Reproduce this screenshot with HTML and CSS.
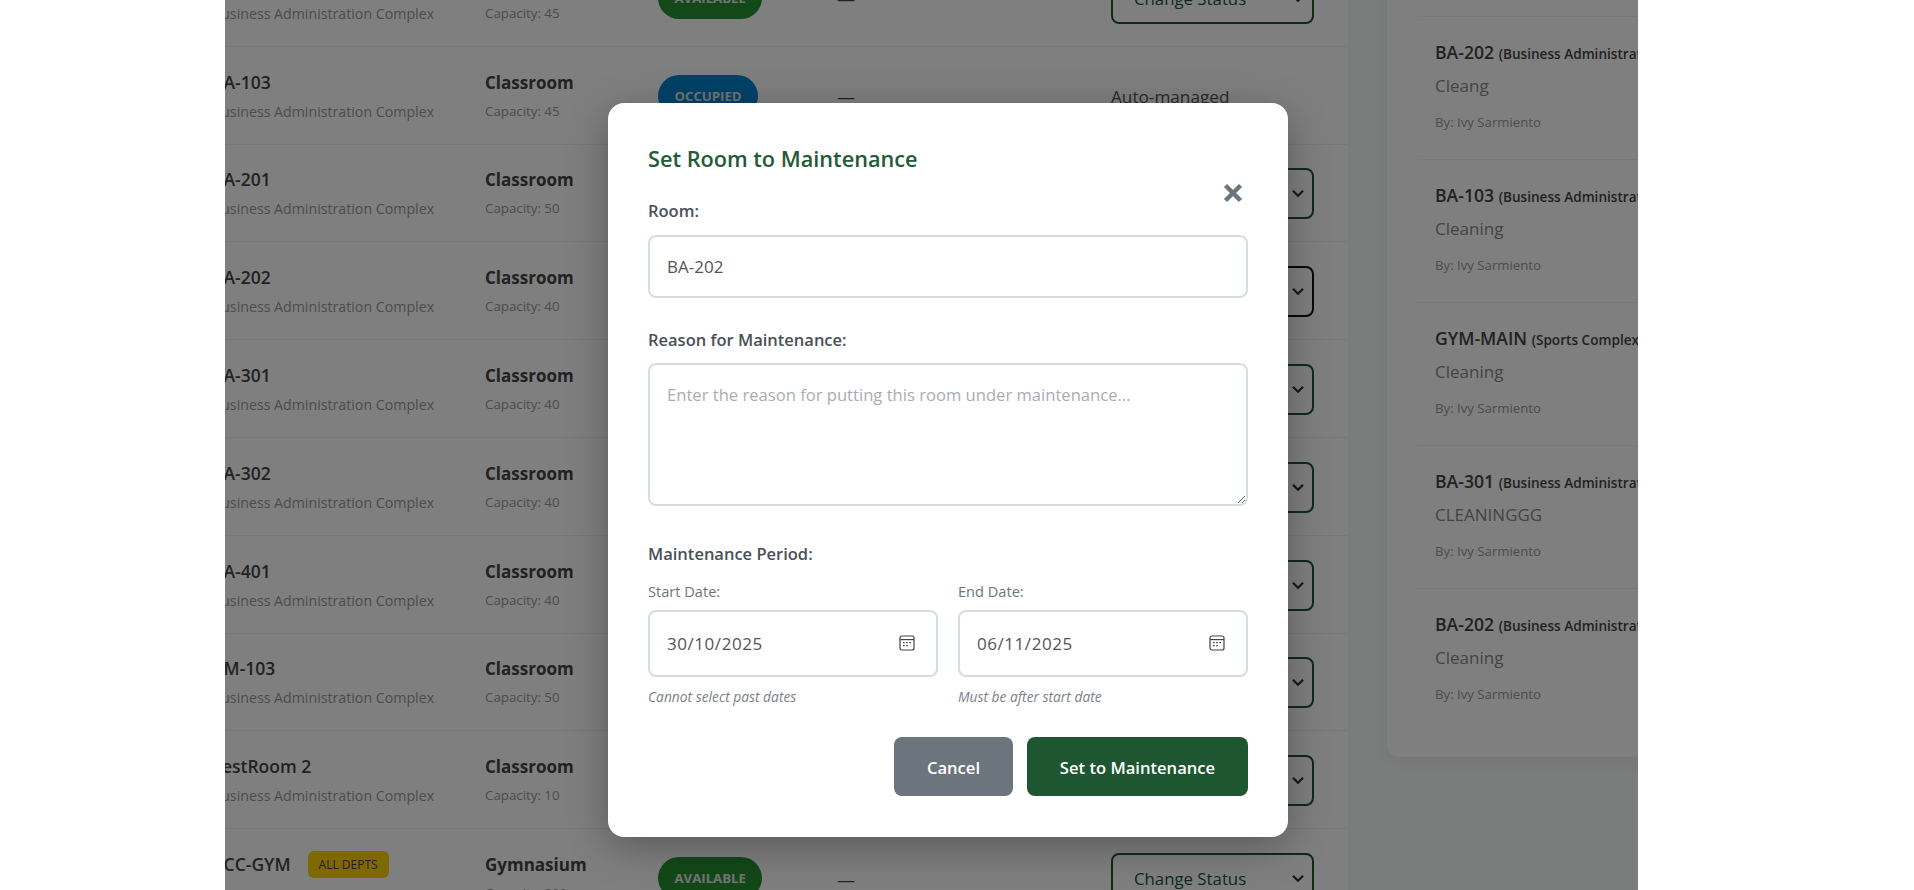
FILE: index.html
```html
<!DOCTYPE html>
<html lang="en">
<head>
    <meta charset="UTF-8">
    <meta name="viewport" content="width=device-width, initial-scale=1.0">
    <title>Room Management</title>
    <link rel="stylesheet" href="styles.css">
</head>
<body>
    <div class="page">
        <div class="dashboard">
            <div class="room-table">
                <div class="room-row">
                    <div><div class="room-name">BA-102</div><div class="room-building">Business Administration Complex</div></div>
                    <div><div class="room-type">Classroom</div><div class="room-capacity">Capacity: 45</div></div>
                    <div><span class="pill pill-available">AVAILABLE</span></div>
                    <div class="dash">—</div>
                    <div class="status-select">Change Status<svg viewBox="0 0 12 8"><path d="M1.5 1.5 6 6l4.5-4.5"/></svg></div>
                </div>
                <div class="room-row">
                    <div><div class="room-name">BA-103</div><div class="room-building">Business Administration Complex</div></div>
                    <div><div class="room-type">Classroom</div><div class="room-capacity">Capacity: 45</div></div>
                    <div><span class="pill pill-occupied">OCCUPIED</span></div>
                    <div class="dash">—</div>
                    <div class="auto-managed">Auto-managed</div>
                </div>
                <div class="room-row">
                    <div><div class="room-name">BA-201</div><div class="room-building">Business Administration Complex</div></div>
                    <div><div class="room-type">Classroom</div><div class="room-capacity">Capacity: 50</div></div>
                    <div><span class="pill pill-available">AVAILABLE</span></div>
                    <div class="dash">—</div>
                    <div class="status-select">Change Status<svg viewBox="0 0 12 8"><path d="M1.5 1.5 6 6l4.5-4.5"/></svg></div>
                </div>
                <div class="room-row">
                    <div><div class="room-name">BA-202</div><div class="room-building">Business Administration Complex</div></div>
                    <div><div class="room-type">Classroom</div><div class="room-capacity">Capacity: 40</div></div>
                    <div><span class="pill pill-available">AVAILABLE</span></div>
                    <div class="dash">—</div>
                    <div class="status-select is-active">Change Status<svg viewBox="0 0 12 8"><path d="M1.5 1.5 6 6l4.5-4.5"/></svg></div>
                </div>
                <div class="room-row">
                    <div><div class="room-name">BA-301</div><div class="room-building">Business Administration Complex</div></div>
                    <div><div class="room-type">Classroom</div><div class="room-capacity">Capacity: 40</div></div>
                    <div><span class="pill pill-available">AVAILABLE</span></div>
                    <div class="dash">—</div>
                    <div class="status-select">Change Status<svg viewBox="0 0 12 8"><path d="M1.5 1.5 6 6l4.5-4.5"/></svg></div>
                </div>
                <div class="room-row">
                    <div><div class="room-name">BA-302</div><div class="room-building">Business Administration Complex</div></div>
                    <div><div class="room-type">Classroom</div><div class="room-capacity">Capacity: 40</div></div>
                    <div><span class="pill pill-available">AVAILABLE</span></div>
                    <div class="dash">—</div>
                    <div class="status-select">Change Status<svg viewBox="0 0 12 8"><path d="M1.5 1.5 6 6l4.5-4.5"/></svg></div>
                </div>
                <div class="room-row">
                    <div><div class="room-name">BA-401</div><div class="room-building">Business Administration Complex</div></div>
                    <div><div class="room-type">Classroom</div><div class="room-capacity">Capacity: 40</div></div>
                    <div><span class="pill pill-available">AVAILABLE</span></div>
                    <div class="dash">—</div>
                    <div class="status-select">Change Status<svg viewBox="0 0 12 8"><path d="M1.5 1.5 6 6l4.5-4.5"/></svg></div>
                </div>
                <div class="room-row">
                    <div><div class="room-name">BM-103</div><div class="room-building">Business Administration Complex</div></div>
                    <div><div class="room-type">Classroom</div><div class="room-capacity">Capacity: 50</div></div>
                    <div><span class="pill pill-available">AVAILABLE</span></div>
                    <div class="dash">—</div>
                    <div class="status-select">Change Status<svg viewBox="0 0 12 8"><path d="M1.5 1.5 6 6l4.5-4.5"/></svg></div>
                </div>
                <div class="room-row">
                    <div><div class="room-name">TestRoom 2</div><div class="room-building">Business Administration Complex</div></div>
                    <div><div class="room-type">Classroom</div><div class="room-capacity">Capacity: 10</div></div>
                    <div><span class="pill pill-available">AVAILABLE</span></div>
                    <div class="dash">—</div>
                    <div class="status-select">Change Status<svg viewBox="0 0 12 8"><path d="M1.5 1.5 6 6l4.5-4.5"/></svg></div>
                </div>
                <div class="room-row">
                    <div><div class="room-name">ACC-GYM <span class="dept-badge">ALL DEPTS</span></div><div class="room-building">Sports Complex</div></div>
                    <div><div class="room-type">Gymnasium</div><div class="room-capacity">Capacity: 200</div></div>
                    <div><span class="pill pill-available">AVAILABLE</span></div>
                    <div class="dash">—</div>
                    <div class="status-select">Change Status<svg viewBox="0 0 12 8"><path d="M1.5 1.5 6 6l4.5-4.5"/></svg></div>
                </div>
            </div>

            <div class="side-card">
                <div class="side-list">
                    <div class="side-item">
                        <div class="side-title">BA-202 <span class="side-building">(Business Administration Complex)</span></div>
                        <div class="side-reason">Cleang</div>
                        <div class="side-by">By: Ivy Sarmiento</div>
                    </div>
                    <div class="side-item">
                        <div class="side-title">BA-103 <span class="side-building">(Business Administration Complex)</span></div>
                        <div class="side-reason">Cleaning</div>
                        <div class="side-by">By: Ivy Sarmiento</div>
                    </div>
                    <div class="side-item">
                        <div class="side-title">GYM-MAIN <span class="side-building">(Sports Complex)</span></div>
                        <div class="side-reason">Cleaning</div>
                        <div class="side-by">By: Ivy Sarmiento</div>
                    </div>
                    <div class="side-item">
                        <div class="side-title">BA-301 <span class="side-building">(Business Administration Complex)</span></div>
                        <div class="side-reason">CLEANINGGG</div>
                        <div class="side-by">By: Ivy Sarmiento</div>
                    </div>
                    <div class="side-item">
                        <div class="side-title">BA-202 <span class="side-building">(Business Administration Complex)</span></div>
                        <div class="side-reason">Cleaning</div>
                        <div class="side-by">By: Ivy Sarmiento</div>
                    </div>
                </div>
            </div>
        </div>

        <div class="overlay">
            <form class="modal">
                <h2>Set Room to Maintenance</h2>
                <button type="button" class="close-btn" aria-label="Close">
                    <svg viewBox="0 0 20 20"><path d="M2.5 2.5l15 15M17.5 2.5l-15 15"/></svg>
                </button>

                <label class="field-label" for="roomInput">Room:</label>
                <input class="field room-field" id="roomInput" type="text" value="BA-202">

                <label class="field-label reason-label" for="reasonInput">Reason for Maintenance:</label>
                <textarea class="field reason-field" id="reasonInput" placeholder="Enter the reason for putting this room under maintenance..."></textarea>

                <div class="field-label period-label">Maintenance Period:</div>
                <div class="date-row">
                    <div>
                        <label class="date-label" for="startDate">Start Date:</label>
                        <div class="date-box">
                            <input class="field date-field" id="startDate" type="text" value="30/10/2025">
                            <svg class="calendar" viewBox="0 0 16 16"><rect x="1" y="1" width="14" height="14" rx="2"/><path d="M1 4.6h14"/><path class="dots" d="M4 7.6h1.6M7.2 7.6h1.6M10.4 7.6H12M4 10.6h1.6M7.2 10.6h1.6"/></svg>
                        </div>
                        <small>Cannot select past dates</small>
                    </div>
                    <div>
                        <label class="date-label" for="endDate">End Date:</label>
                        <div class="date-box">
                            <input class="field date-field" id="endDate" type="text" value="06/11/2025">
                            <svg class="calendar" viewBox="0 0 16 16"><rect x="1" y="1" width="14" height="14" rx="2"/><path d="M1 4.6h14"/><path class="dots" d="M4 7.6h1.6M7.2 7.6h1.6M10.4 7.6H12M4 10.6h1.6M7.2 10.6h1.6"/></svg>
                        </div>
                        <small>Must be after start date</small>
                    </div>
                </div>

                <div class="modal-actions">
                    <button type="button" class="btn btn-cancel">Cancel</button>
                    <button type="button" class="btn btn-save">Set to Maintenance</button>
                </div>
            </form>
        </div>
    </div>
</body>
</html>
```

FILE: styles.css
```css
/* General */
body {
    margin: 0;
    background: #fff;
    font-family: "Open Sans", "Noto Sans", sans-serif;
    color: #333;
    overflow: hidden;
}

.page {
    position: relative;
    width: 1413px;
    height: 890px;
    margin-left: 225px;
    overflow: hidden;
    background: #f5f8f7;
}

.dashboard {
    display: flex;
    align-items: flex-start;
    gap: 39px;
    margin: -51px 0 0 -13px;
}

/* Room table */
.room-table {
    flex: none;
    width: 1136px;
    background: #fff;
}

.room-row {
    display: grid;
    grid-template-columns: 273px 172px 180px 274px 203px;
    align-items: center;
    box-sizing: border-box;
    height: 97.8px;
    padding-top: 1px;
    border-bottom: 1px solid #f0f0f0;
}

.room-name {
    font-size: 17.5px;
    font-weight: 600;
    line-height: 24px;
    color: #444;
    display: flex;
    align-items: center;
    gap: 17px;
}

.room-building {
    margin-top: 8px;
    font-size: 14.2px;
    line-height: 20px;
    color: #999;
}

.room-type {
    font-size: 17px;
    font-weight: 700;
    line-height: 24px;
    color: #444;
}

.room-capacity {
    margin-top: 6px;
    font-size: 13.3px;
    line-height: 20px;
    color: #999;
}

.pill {
    display: inline-block;
    margin-left: 1px;
    padding: 0 16.5px;
    border-radius: 21px;
    font-size: 13.2px;
    font-weight: 700;
    line-height: 42px;
    color: #e8e8e8;
}

.pill-available {
    background: #269030;
}

.pill-occupied {
    background: #0084d0;
}

.dash {
    padding-top: 3px;
    font-size: 18px;
    color: #444;
}

.auto-managed {
    padding-top: 1px;
    font-size: 17.2px;
    color: #555;
}

.status-select {
    display: flex;
    align-items: center;
    justify-content: space-between;
    box-sizing: border-box;
    height: 51px;
    margin-top: 1px;
    padding: 0 7px 0 21px;
    border: 2px solid #1e5631;
    border-radius: 8px;
    font-size: 16.8px;
    font-weight: 500;
    color: #1e5631;
}

.status-select svg {
    width: 14px;
    height: 9px;
    fill: none;
    stroke: #333;
    stroke-width: 2;
}

.status-select.is-active {
    border-color: #111;
}

.dept-badge {
    padding: 0 11px;
    border-radius: 6px;
    background: #ffd000;
    font-size: 12px;
    font-weight: 500;
    line-height: 27px;
}

/* Side card */
.side-card {
    flex: none;
    box-sizing: border-box;
    width: 400px;
    height: 808px;
    padding: 67px 0 0 30px;
    border-radius: 12px;
    background: #fff;
    box-shadow: 0 4px 20px rgba(0, 0, 0, 0.05);
}

.side-list {
    border-top: 1px solid #f0f0f0;
}

.side-item {
    box-sizing: border-box;
    height: 143px;
    padding: 23px 0 0 18px;
    border-bottom: 1px solid #f0f0f0;
    white-space: nowrap;
}

.side-item:last-child {
    border-bottom: none;
}

.side-title {
    font-size: 17.6px;
    font-weight: 600;
    line-height: 24px;
    color: #444;
}

.side-building {
    font-size: 13.6px;
}

.side-reason {
    margin-top: 8px;
    font-size: 17px;
    line-height: 24px;
    color: #888;
}

.side-by {
    margin-top: 15px;
    font-size: 13.2px;
    line-height: 18px;
    color: #999;
}

/* Modal */
.overlay {
    position: absolute;
    top: 0;
    left: 0;
    right: 0;
    bottom: 0;
    background: rgba(0, 0, 0, 0.5);
    padding: 103px 0 0 383px;
}

.modal {
    position: relative;
    box-sizing: border-box;
    width: 680px;
    height: 734px;
    padding: 40px;
    border-radius: 16px;
    background: #fff;
    box-shadow: 0 10px 40px rgba(0, 0, 0, 0.3);
}

.modal h2 {
    margin: 0 0 24px;
    font-size: 21.7px;
    font-weight: 600;
    line-height: 32px;
    color: #245a38;
}

.close-btn {
    position: absolute;
    top: 80px;
    right: 45px;
    padding: 0;
    width: 20px;
    height: 20px;
    border: none;
    background: none;
}

.close-btn svg {
    display: block;
    fill: none;
    stroke: #6c757d;
    stroke-width: 4.5;
}

.field-label {
    display: block;
    font-size: 16.5px;
    font-weight: 600;
    line-height: 24px;
    color: #495057;
}

.field {
    display: block;
    box-sizing: border-box;
    width: 100%;
    padding: 0 17px;
    border: 2px solid #d5dedb;
    border-radius: 8px;
    background: #fff;
    font-family: inherit;
    font-size: 16.6px;
    color: #555;
    outline: none;
}

.room-field {
    height: 63px;
    margin-top: 12px;
    font-size: 17px;
}

.reason-label {
    margin-top: 30px;
}

.reason-field {
    height: 143px;
    margin-top: 11px;
    padding-top: 18px;
}

.reason-field::placeholder {
    color: #a8adb3;
    opacity: 1;
}

.period-label {
    margin-top: 36px;
}

.date-row {
    display: grid;
    grid-template-columns: 1fr 1fr;
    gap: 20px;
    margin-top: 15px;
}

.date-label {
    display: block;
    font-size: 14.6px;
    line-height: 20px;
    color: #6c757d;
}

.date-box {
    position: relative;
    margin-top: 9px;
}

.date-field {
    height: 67px;
    font-size: 17px;
    letter-spacing: 0.55px;
}

.calendar {
    position: absolute;
    top: 25px;
    right: 23px;
    width: 16px;
    height: 16px;
    fill: none;
    stroke: #444;
    stroke-width: 1.2;
}

.calendar .dots {
    stroke-width: 1.4;
}

.date-row small {
    display: block;
    margin-top: 11px;
    font-size: 13.8px;
    font-style: italic;
    line-height: 18px;
    color: #7a8288;
}

.modal-actions {
    display: flex;
    justify-content: flex-end;
    gap: 14px;
    margin-top: 31px;
}

.btn {
    height: 59px;
    padding: 2px 0 0;
    border: none;
    border-radius: 8px;
    font-family: inherit;
    font-size: 16.6px;
    font-weight: 600;
    color: #fff;
}

.btn-cancel {
    width: 119px;
    background: #6c757d;
}

.btn-save {
    width: 221px;
    background: #1e5631;
}
```
